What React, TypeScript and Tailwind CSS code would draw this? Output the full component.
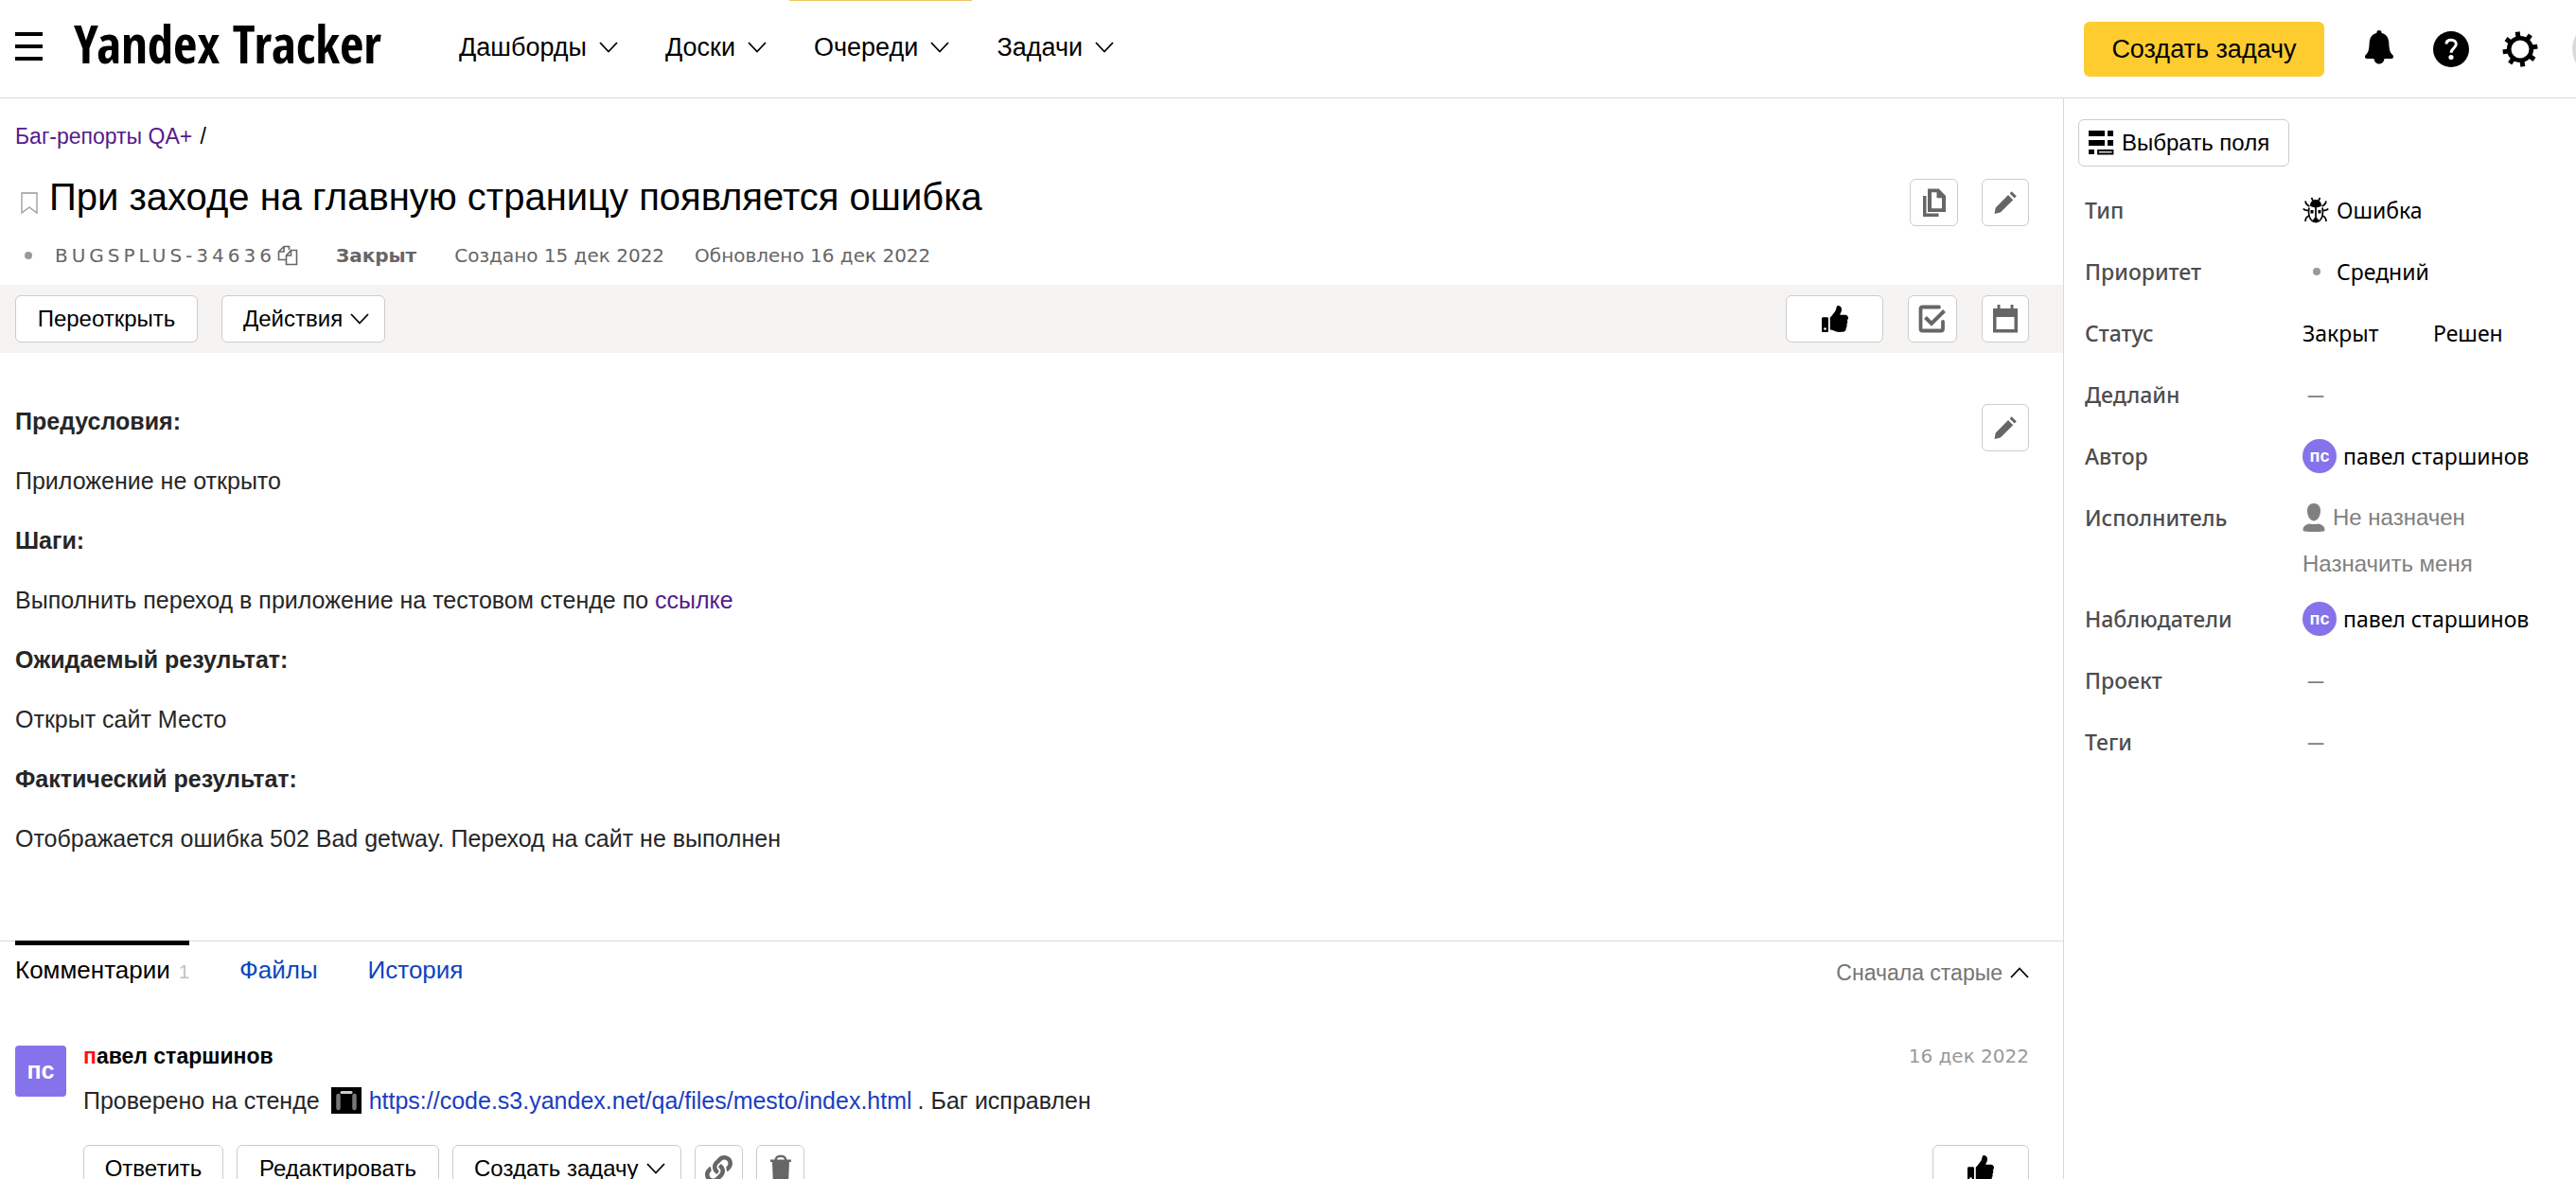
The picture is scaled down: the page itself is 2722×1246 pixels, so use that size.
import type { ReactNode } from "react";
import { FaLink, FaThumbsUp } from "react-icons/fa";

const arial = "font-['Liberation_Sans',Arial,sans-serif]";
const verdana = "font-['DejaVu_Sans',Verdana,sans-serif]";
const noto = "font-['Noto_Sans','Open_Sans',sans-serif]";

function Chevron({ up = false }: { up?: boolean }) {
  return (
    <svg width="20" height="12" viewBox="0 0 20 12" fill="none" stroke="currentColor" strokeWidth="1.8" aria-hidden="true">
      <path d={up ? "M1 11 10 1.5 19 11" : "M1 1 10 10.5 19 1"} />
    </svg>
  );
}

function BellIcon() {
  return (
    <svg width="32" height="38" viewBox="0 0 32 38" aria-hidden="true">
      <path d="M16 1c1.700 0 2.600 1.200 2.700 2.900C23.500 5 26 8.700 26.300 14c.3 6 .6 9.600 3.200 12.200 1 .9 1.500 1.600 1.500 2.800 0 1.300-.8 2-2 2h-7.500c-.4 3.300-2.600 5.500-5.500 5.500S10.900 34.300 10.500 31H3c-1.200 0-2-.7-2-2 0-1.200.5-1.900 1.500-2.800C5.100 23.600 5.400 20 5.700 14 6 8.700 8.500 5 13.300 3.900 13.400 2.200 14.300 1 16 1z" />
    </svg>
  );
}

function HelpIcon() {
  return (
    <svg width="38" height="38" viewBox="0 0 38 38" aria-hidden="true">
      <circle cx="19" cy="19" r="19" />
      <path d="M13.800 13.500c.4-2.700 2.500-4.200 5.300-4.200 3 0 5.200 1.700 5.200 4.300 0 4.200-5.200 4.300-5.200 9.200" fill="none" stroke="#fff" strokeWidth="3" />
      <circle cx="19" cy="27.500" r="2.600" fill="#fff" />
    </svg>
  );
}

function GearIcon() {
  return (
    <svg width="38" height="38" viewBox="-19 -19 38 38" aria-hidden="true">
      <circle r="11.800" fill="none" stroke="#000" strokeWidth="4.600" />
      {[-9, 36, 81, 126, 171, 216, 261, 306].map((angle) => (
        <path key={angle} d="M-2.500-18.500h5v6h-5z" transform={`rotate(${angle})`} />
      ))}
    </svg>
  );
}

function FieldsIcon() {
  return (
    <svg width="27" height="26" viewBox="0 0 27 26" aria-hidden="true">
      <path d="M0 0h17v6H0zM20 0h6v6h-6zM0 10h17v6H0zM20 10h6v6h-6zM0 20h6v5H0z" />
      <path d="M10 21h15.500v3.500H10z" fill="#ddd" stroke="#000" strokeWidth="1.800" />
    </svg>
  );
}

function BugIcon() {
  return (
    <svg width="28" height="28" viewBox="0 0 28 28" aria-hidden="true">
      <g fill="none" stroke="#000" strokeWidth="1.700">
        <path d="M9.500 1l1.500 3M18.500 1L17 4M3 4.500c.5 3 2 4.500 4.500 5.500M25 4.500c-.5 3-2 4.500-4.500 5.500M.8 12.500c1 1.500 3 2 5.700 2M27.200 12.500c-1 1.500-3 2-5.700 2M3 26c0-3.500 1.200-5 4-6M25 26c0-3.500-1.200-5-4-6" />
        <path d="M7 11.500c-1.500 8 1 15 7 15s8.500-7 7-15M14 10v16" />
      </g>
      <path d="M8 9.500C8 5.500 10.500 3 14 3s6 2.500 6 6.500c-1.500 1.200-3.500 1.800-6 1.800s-4.500-.6-6-1.800z" />
      <path d="M8.500 14h3v3.500h-3zM16.500 14h3v3.500h-3zM14 22c1.500 0 2.500 1.200 3 3-.8 1.500-1.700 2.300-3 2.300s-2.200-.8-3-2.300c.5-1.800 1.500-3 3-3z" />
    </svg>
  );
}

function PersonIcon() {
  return (
    <svg width="24" height="30" viewBox="0 0 24 30" fill="#808080" aria-hidden="true">
      <path d="M12 0c4.500 0 7 3.200 7 7.500 0 5.800-3 11-7 11s-7-5.200-7-11C5 3.200 7.500 0 12 0zM.5 28C.5 24 4 22 7.500 21.500c2.500.7 6.500.7 9 0C20 22 23.500 24 23.500 28c0 .8-.5 1.300-1.400 1.400-6.700.7-13.500.7-20.200 0C1 29.300.5 28.800.5 28z" />
    </svg>
  );
}

function PagesIcon() {
  return (
    <svg width="26" height="30" viewBox="0 0 26 30" fill="#666" aria-hidden="true">
      <path d="M1 8h3.500v18.500h13v3.500H1z" />
      <path fillRule="evenodd" d="M6 .5h11.700L25 8v17H6zM10 4.300v16.900h11V10.200h-5.500V4.300z" />
    </svg>
  );
}

function PencilIcon() {
  return (
    <svg width="26" height="26" viewBox="0 0 26 26" fill="#666" aria-hidden="true">
      <path d="M1.500 25l1.200-6.500L16 5l5.200 5.200L7.800 23.500zM17.600 3.600l2-2.300 5.200 5-2.200 2.300z" />
    </svg>
  );
}

function CheckSquareIcon() {
  return (
    <svg width="30" height="30" viewBox="0 0 30 30" fill="none" stroke="#666" aria-hidden="true">
      <path d="M22 2.500H4.500c-1.500 0-2 .5-2 2v21c0 1.500.5 2 2 2h19.500c1.500 0 2-.5 2-2V18" strokeWidth="3.800" strokeLinecap="round" />
      <path d="M7.500 13.500l6.500 6.500L27.500 6.500" strokeWidth="4" />
    </svg>
  );
}

function CalendarIcon() {
  return (
    <svg width="26" height="30" viewBox="0 0 26 30" fill="#666" aria-hidden="true">
      <path fillRule="evenodd" d="M4.500 0h3v4h11V0h3v4H26v25.500H0V4h4.500zM3.500 13v13h19V13z" />
    </svg>
  );
}

function TrashIcon() {
  return (
    <svg width="24" height="30" viewBox="0 0 24 30" fill="#666" aria-hidden="true">
      <path d="M1 5.500h4.500C6.200 2 8.500.8 12 .8s5.800 1.200 6.500 4.700H23V8h-2l-.8 19.500c0 1.200-.8 2-2 2H5.800c-1.200 0-2-.8-2-2L3 8H1zM8 5.500h8c-.4-1.700-1.600-2.400-4-2.400s-3.600.7-4 2.400z" />
    </svg>
  );
}

function CopyIcon() {
  return (
    <svg width="22" height="22" viewBox="0 0 22 22" fill="none" stroke="#666" strokeWidth="1.600" aria-hidden="true">
      <path d="M9 15.500H1.500V7L7 1.500h5.500V5M1.500 7H7V1.500" />
      <path d="M20.500 20.500H9.500V11L14.500 5.500h6zM9.500 11h5V5.500" />
    </svg>
  );
}

function BookmarkIcon() {
  return (
    <svg width="18" height="23" viewBox="0 0 18 23" fill="none" stroke="#999" strokeWidth="1.300" aria-hidden="true">
      <path d="M1 1h16v21l-8-6-8 6z" />
    </svg>
  );
}

function NavItem({ label, active = false }: { label: string; active?: boolean }) {
  return (
    <button className={`flex h-full items-center gap-[13px] border-t pr-6 pb-1 pl-[26px] text-[27px] leading-9 ${active ? "border-[#edc55f]" : "border-transparent"}`}>
      {label}
      <Chevron />
    </button>
  );
}

function Btn({ children, className = "", label }: { children: ReactNode; className?: string; label?: string }) {
  return (
    <button aria-label={label} className={`flex h-[50px] shrink-0 items-center gap-2 rounded-md border border-[#ccc] bg-white text-[24px] leading-8 text-black ${className}`}>
      {children}
    </button>
  );
}

function Field({ label, children }: { label: string; children: ReactNode }) {
  return (
    <div className="flex">
      <dt className="w-[230px] shrink-0 text-[23px] leading-9 font-medium text-[#4d4d4d]">{label}</dt>
      <dd className="min-w-0 flex-1 text-[23px] leading-9 whitespace-nowrap">{children}</dd>
    </div>
  );
}

function Person() {
  return (
    <span className="flex items-center gap-[7px]">
      <span className={`flex size-9 items-center justify-center rounded-full bg-[#8673eb] text-[18px] font-bold text-white ${arial}`}>пс</span>
      павел старшинов
    </span>
  );
}

const Dash = () => <span className="block pl-[5px] text-[18px] font-semibold text-[#808080]">—</span>;

export default function App() {
  return (
    <div className={`flex h-screen flex-col overflow-hidden bg-white text-black ${arial}`}>
      <header className="flex h-[104px] shrink-0 items-center border-b border-[#d9d9d9] pl-4">
        <button aria-label="Меню" className="mb-[6px] flex w-[29px] flex-col gap-[9px]">
          <span className="h-1 bg-black" />
          <span className="h-1 bg-black" />
          <span className="h-1 bg-black" />
        </button>
        <a href="#" className="mb-3 ml-[33px] w-[324px] font-['Noto_Sans_Condensed','Open_Sans_Condensed','Roboto_Condensed','Roboto',sans-serif] text-[55px] leading-[60px] font-bold whitespace-nowrap">
          Yandex Tracker
        </a>
        <nav className="ml-[57px] flex h-full">
          <NavItem label="Дашборды" />
          <NavItem label="Доски" />
          <NavItem label="Очереди" active />
          <NavItem label="Задачи" />
        </nav>
        <div className="ml-auto flex items-center">
          <button className="mr-[42px] h-[58px] w-[254px] rounded-md bg-[#ffcc30] text-[27px] leading-9">Создать задачу</button>
          <button aria-label="Уведомления" className="mr-[41px] mb-1"><BellIcon /></button>
          <button aria-label="Помощь" className="mr-[35px]"><HelpIcon /></button>
          <button aria-label="Настройки" className="mr-9"><GearIcon /></button>
          <div className="h-14 w-1 overflow-hidden">
            <div className="size-14 rounded-full bg-[#d9d9d9]" />
          </div>
        </div>
      </header>

      <div className="flex min-h-0 flex-1">
        <main className="min-w-0 flex-1">
          <nav className="px-4 pt-6 text-[23px] leading-8">
            <a href="#" className="mr-[2px] text-[#551a8b]">Баг-репорты QA+</a> /
          </nav>
          <div className="mt-[29px] flex h-[50px] items-center pr-9 pl-[22px]">
            <button aria-label="В избранное"><BookmarkIcon /></button>
            <h1 className="ml-3 pb-3 text-[40px] leading-[48px] whitespace-nowrap">При заходе на главную страницу появляется ошибка</h1>
            <div className="ml-auto flex gap-[25px]">
              <Btn className="w-[51px] justify-center" label="Клонировать"><PagesIcon /></Btn>
              <Btn className="w-[50px] justify-center" label="Изменить заголовок"><PencilIcon /></Btn>
            </div>
          </div>
          <div className={`flex h-[62px] items-center pl-[26px] text-[20px] leading-7 text-[#666] ${verdana}`}>
            <span className="size-2 rounded-full bg-[#999]" />
            <span className="ml-6 tracking-[4px]">BUGSPLUS-34636</span>
            <button aria-label="Скопировать ключ" className="ml-[2px]"><CopyIcon /></button>
            <b className="ml-10">Закрыт</b>
            <span className="ml-10">Создано 15 дек 2022</span>
            <span className="ml-8">Обновлено 16 дек 2022</span>
          </div>
          <div className="flex h-[72px] items-center bg-[#f5f4f2] pr-9 pl-4">
            <Btn className="w-[193px] justify-center">Переоткрыть</Btn>
            <Btn className="ml-[25px] w-[173px] pl-[22px]">Действия <Chevron /></Btn>
            <Btn className="ml-auto w-[103px] justify-center" label="Нравится"><FaThumbsUp size={28} /></Btn>
            <Btn className="ml-[26px] w-[52px] justify-center" label="Чек-лист"><CheckSquareIcon /></Btn>
            <Btn className="ml-[26px] w-[50px] justify-center" label="Дедлайн"><CalendarIcon /></Btn>
          </div>
          <section className="flex justify-between pt-[54px] pr-9 pb-[90px] pl-4">
            <div className="flex flex-col gap-[27px] text-[25px] leading-9 text-[#262626]">
              <p className="font-bold">Предусловия:</p>
              <p>Приложение не открыто</p>
              <p className="font-bold">Шаги:</p>
              <p>Выполнить переход в приложение на тестовом стенде по <a href="#" className="text-[#551a8b]">ссылке</a></p>
              <p className="font-bold">Ожидаемый результат:</p>
              <p>Открыт сайт Место</p>
              <p className="font-bold">Фактический результат:</p>
              <p>Отображается ошибка 502 Bad getway. Переход на сайт не выполнен</p>
            </div>
            <Btn className="w-[50px] justify-center" label="Изменить описание"><PencilIcon /></Btn>
          </section>

          <div className="flex items-start border-t border-[#d9d9d9] pr-9 pl-4 text-[26px] leading-9">
            <button className="-mt-px flex w-[184px] items-baseline justify-between border-t-[5px] border-black pt-2">
              Комментарии <span className="text-[20px] text-[#bfbfbf]">1</span>
            </button>
            <button className="ml-[53px] pt-3 text-[#0d44bf]">Файлы</button>
            <button className="ml-[53px] pt-3 text-[#0d44bf]">История</button>
            <button className="ml-auto flex items-center gap-2 pt-[15px] text-[23px] text-[#757575]">
              Сначала старые <span className="text-black"><Chevron up /></span>
            </button>
          </div>

          <article className="mt-[54px] flex pr-9 pl-4">
            <div className="mt-[5px] flex size-[54px] shrink-0 items-center justify-center rounded bg-[#8673eb] text-[25px] font-bold text-white">пс</div>
            <div className="ml-[18px] flex-1">
              <div className="flex items-center justify-between">
                <h2 className="text-[23px] leading-8 font-bold"><span className="text-[#ff0d1c]">п</span>авел старшинов</h2>
                <time className={`text-[20px] leading-8 text-[#999] ${verdana}`}>16 дек 2022</time>
              </div>
              <p className="mt-[13px] flex text-[25px] leading-9 text-[#262626]">
                Проверено на стенде
                <svg className="mt-1 ml-3" width="32" height="28" viewBox="0 0 32 28" aria-hidden="true">
                  <path d="M0 0h32v28H0z" />
                  <path d="M7.500 9v13M24.500 9v13" stroke="#777" strokeWidth="4.500" strokeLinecap="round" />
                  <path d="M11 5.500h10" stroke="#ccc" strokeWidth="3" strokeLinecap="round" />
                </svg>
                <a href="#" className="ml-2 text-[#1a3dc1]">https://code.s3.yandex.net/qa/files/mesto/index.html</a>
                <span className="ml-[6px]">. Баг исправлен</span>
              </p>
              <div className="mt-[29px] flex gap-[14px]">
                <Btn className="w-[148px] justify-center">Ответить</Btn>
                <Btn className="w-[214px] justify-center">Редактировать</Btn>
                <Btn className="w-[242px] pl-[22px]">Создать задачу <Chevron /></Btn>
                <Btn className="w-[51px] justify-center" label="Ссылка"><FaLink size={29} color="#666" /></Btn>
                <Btn className="w-[51px] justify-center" label="Удалить"><TrashIcon /></Btn>
                <Btn className="ml-auto w-[102px] justify-center" label="Нравится"><FaThumbsUp size={28} /></Btn>
              </div>
            </div>
          </article>
        </main>

        <aside className={`w-[542px] shrink-0 border-l border-[#d9d9d9] pt-[22px] ${noto}`}>
          <Btn className={`ml-[15px] w-[223px] pl-[10px] ${arial}`}><FieldsIcon /> Выбрать поля</Btn>
          <dl className="mt-7 ml-[22px] flex flex-col gap-[29px]">
            <Field label="Тип">
              <span className="flex items-center gap-2"><BugIcon /> Ошибка</span>
            </Field>
            <Field label="Приоритет">
              <span className="flex items-center gap-[17px] pl-[11px]"><span className="size-2 rounded-full bg-[#999]" /> Средний</span>
            </Field>
            <Field label="Статус">
              <span className="flex"><span className="w-[138px]">Закрыт</span> <span>Решен</span></span>
            </Field>
            <Field label="Дедлайн"><Dash /></Field>
            <Field label="Автор"><Person /></Field>
            <Field label="Исполнитель">
              <div className={`text-[24px] text-[#808080] ${arial}`}>
                <span className="flex items-center gap-2"><PersonIcon /> Не назначен</span>
                <button className="mt-5 block leading-[22px]">Назначить меня</button>
              </div>
            </Field>
            <Field label="Наблюдатели"><Person /></Field>
            <Field label="Проект"><Dash /></Field>
            <Field label="Теги"><Dash /></Field>
          </dl>
        </aside>
      </div>
    </div>
  );
}
